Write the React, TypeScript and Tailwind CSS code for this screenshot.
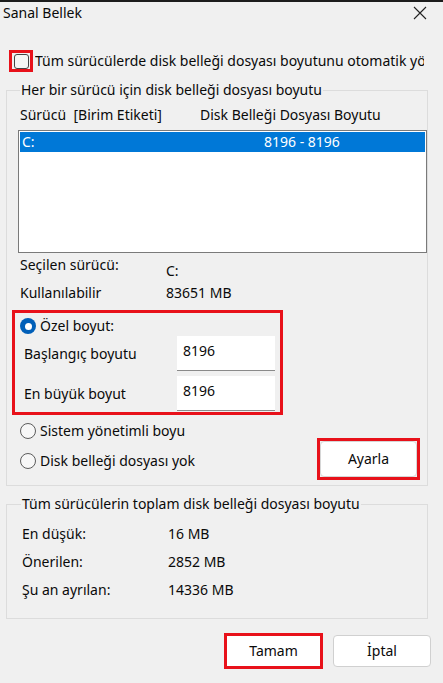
import React from 'react';

const FONT = "font-['Noto_Sans','Segoe_UI',sans-serif]";

function Radio({ checked }: { checked?: boolean }) {
  if (checked) {
    return (
      <span className="flex h-[16px] w-[16px] shrink-0 items-center justify-center rounded-full bg-[#005fb8]">
        <span className="h-[7px] w-[7px] rounded-full bg-white" />
      </span>
    );
  }
  return <span className="h-[16px] w-[16px] shrink-0 rounded-full border border-[#5c5c5c] bg-[#f7f7f7]" />;
}

function Field({ label, value }: { label: string; value: string }) {
  return (
    <div className="flex h-[35px] items-center">
      <span className="w-[162px] pl-[9px]">{label}</span>
      <div className="h-[35px] w-[98px] border-b border-[#8a8a8a] bg-white pl-[6px] pt-[5px] leading-[20px]">
        {value}
      </div>
    </div>
  );
}

function StatRow({ label, value }: { label: string; value: string }) {
  return (
    <div className="flex h-[20px] items-center">
      <span className="w-[146px]">{label}</span>
      <span>{value}</span>
    </div>
  );
}

export default function App() {
  return (
    <div
      className={`${FONT} relative h-[683px] w-[443px] overflow-hidden border-t-2 border-[#1c1c1c] bg-[#f0f0f0] text-[14px] leading-[20px] text-[#0a0a0a]`}
    >
      {/* title bar */}
      <div className="flex h-[22px] items-center justify-between pl-[3px] pr-[16px]">
        <span>Sanal Bellek</span>
        <svg width="14" height="14" viewBox="0 0 14 14" aria-hidden="true">
          <path d="M1 1 L13 13 M13 1 L1 13" stroke="#222" strokeWidth="1.1" />
        </svg>
      </div>

      {/* auto manage checkbox */}
      <div className="mt-[26px] flex h-[22px] items-center whitespace-nowrap pl-[9px]">
        <span className="flex h-[22px] w-[24px] shrink-0 items-center justify-center border-[3px] border-[#e8111a]">
          <span className="h-[15px] w-[15px] rounded-[3px] border border-[#444] bg-[#f5f5f5]" />
        </span>
        <span className="ml-[2px] w-[389px] overflow-hidden">
          Tüm sürücülerde disk belleği dosyası boyutunu otomatik yönet
        </span>
      </div>

      {/* per-drive group */}
      <fieldset className="mx-[6px] mt-[8px] w-[422px] border border-[#dcdcdc] pb-[5px] pl-[5px]">
        <legend className="ml-[8px] px-[1px]">Her bir sürücü için disk belleği dosyası boyutu</legend>

        <div className="ml-[8px] mt-[5px] flex h-[20px] items-center whitespace-pre">
          <span className="w-[180px]">Sürücü  [Birim Etiketi]</span>
          <span>Disk Belleği Dosyası Boyutu</span>
        </div>

        <div className="ml-[6px] mt-[5px] h-[123px] border border-[#7a7a7a] bg-white p-[1px]">
          <div className="flex h-[20px] items-center bg-[#0078d7] pl-[2px] text-white">
            <span className="w-[242px]">C:</span>
            <span>8196 - 8196</span>
          </div>
        </div>

        <div className="ml-[8px] mt-[2px] grid grid-cols-[146px_1fr]">
          <span className="h-[20px]">Seçilen sürücü:</span>
          <span className="mt-[6px] h-[20px]">C:</span>
          <span className="mt-[2px] h-[20px]">Kullanılabilir</span>
          <span className="mt-[2px] h-[20px]">83651 MB</span>
        </div>

        <div className="mt-[7px] w-[271px] border-[3px] border-[#e8111a] pb-[1px] pt-[3px]">
          <div className="flex h-[20px] items-center gap-[4px] pl-[5px]">
            <Radio checked />
            <span>Özel boyut:</span>
          </div>
          <Field label="Başlangıç boyutu" value="8196" />
          <div className="mt-[5px]">
            <Field label="En büyük boyut" value="8196" />
          </div>
        </div>

        <div className="flex items-start">
          <div className="ml-[8px] mt-[6px] flex flex-col gap-[10px]">
            <div className="flex h-[20px] w-[165px] items-center gap-[4px] overflow-hidden whitespace-nowrap">
              <Radio />
              <span>Sistem yönetimli boyut</span>
            </div>
            <div className="flex h-[20px] items-center gap-[4px] whitespace-nowrap">
              <Radio />
              <span>Disk belleği dosyası yok</span>
            </div>
          </div>
          <div className="ml-auto mr-[7px] mt-[23px] flex h-[42px] w-[103px] items-center justify-center border-[3px] border-[#e8111a]">
            <button className="h-[36px] w-[97px] rounded-[4px] border border-[#d6d6d6] bg-white">Ayarla</button>
          </div>
        </div>
      </fieldset>

      {/* totals group */}
      <fieldset className="mx-[6px] mt-[8px] w-[422px] border border-[#dcdcdc] pb-[18px] pl-[15px]">
        <legend className="-ml-[1px] px-[1px]">Tüm sürücülerin toplam disk belleği dosyası boyutu</legend>
        <div className="mt-[10px] flex flex-col gap-[8px]">
          <StatRow label="En düşük:" value="16 MB" />
          <StatRow label="Önerilen:" value="2852 MB" />
          <StatRow label="Şu an ayrılan:" value="14336 MB" />
        </div>
      </fieldset>

      {/* dialog buttons */}
      <div className="mt-[14px] flex items-center pl-[224px]">
        <div className="flex h-[36px] w-[99px] items-center justify-center border-[3px] border-[#e8111a]">
          <button className="h-[30px] w-[93px] bg-white">Tamam</button>
        </div>
        <button className="ml-[10px] h-[32px] w-[98px] rounded-[4px] border border-[#d0d0d0] bg-white">İptal</button>
      </div>
    </div>
  );
}
